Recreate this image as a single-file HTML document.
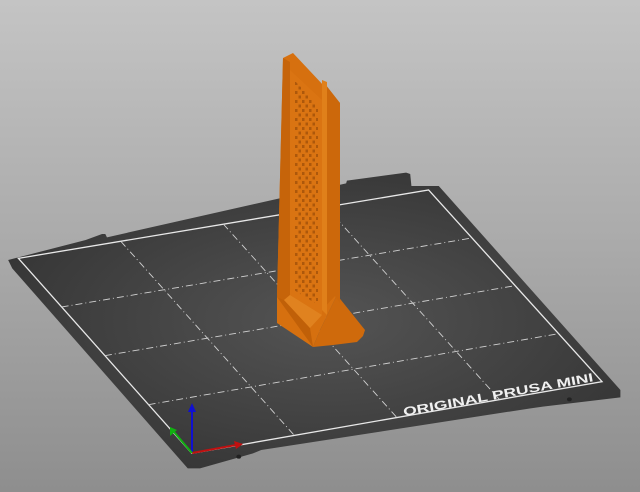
<!DOCTYPE html>
<html><head><style>
html,body{margin:0;padding:0;width:640px;height:492px;overflow:hidden;background:#a8a8a8}
svg{display:block}
</style></head><body>
<svg width="640" height="492" viewBox="0 0 640 492" xmlns="http://www.w3.org/2000/svg">
<defs>
<linearGradient id="bg" x1="0" y1="0" x2="0" y2="1">
<stop offset="0" stop-color="#c4c4c4"/><stop offset="0.5" stop-color="#aaaaaa"/><stop offset="1" stop-color="#8e8e8e"/>
</linearGradient>
<radialGradient id="bed" cx="0.52" cy="0.5" r="0.6">
<stop offset="0" stop-color="#545454"/><stop offset="1" stop-color="#343434"/>
</radialGradient>
<pattern id="holes" width="7" height="9" patternUnits="userSpaceOnUse">
<rect x="1" y="1" width="2.5" height="3" fill="#9a4c08"/>
<rect x="4.5" y="5.5" width="2.5" height="3" fill="#9a4c08"/>
</pattern>
</defs>
<rect width="640" height="492" fill="url(#bg)"/>
<g transform="translate(0,160) scale(0.40816,0.33333)">
<path d="M20,300 L210,240 L250,222 L258,222 L262,232 L848,70 L850,62 L995,38 L1005,42 L1008,78 L1075,78 L1520,690 L1520,712 L1330,740 L1300,745 L640,870 L620,880 L490,925 L460,925 L30,325 Z" fill="url(#bed)"/>
<path d="M45,295 L1050,90 L1475,665 L470,880 Z" fill="none" stroke="#e8e8e8" stroke-width="1.3" vector-effect="non-scaling-stroke"/>
<g stroke="#d0d0d0" stroke-width="0.9" stroke-dasharray="7 3 1 3" fill="none">
<path d="M296,244 L721,826 M547,192 L972,772 M799,141 L1224,719 M151,441 L1156,234 M257,587 L1262,377 M364,734 L1369,521" vector-effect="non-scaling-stroke"/>
</g>
<circle cx="585" cy="890" r="6" fill="#222"/>
<circle cx="1395" cy="718" r="6" fill="#222"/>
</g>
<text x="0" y="0" transform="translate(404,416) rotate(-10.4)" font-family="Liberation Sans, sans-serif" font-weight="bold" font-size="12" fill="#f0f0f0" textLength="193" lengthAdjust="spacingAndGlyphs">ORIGINAL PRUSA MINI</text>
<line x1="192" y1="453" x2="192" y2="410" stroke="#1010d0" stroke-width="2"/>
<polygon points="188,412 196,412 192,403" fill="#1010d0"/>
<line x1="192" y1="453" x2="236" y2="445" stroke="#c01010" stroke-width="2"/>
<polygon points="234,441 236,449 243,444" fill="#c01010"/>
<line x1="192" y1="453" x2="174" y2="432" stroke="#10b010" stroke-width="2"/>
<polygon points="170,436 177,430 170,427" fill="#10b010"/>
<polygon points="357,342 333,345 313,347 320,330 337,295 365,330 363,336" fill="#cf6a0c"/>
<polygon points="283,58 293,53 340,103 340,303 337,295 320,330 313,347 277,323 277,297" fill="#d6700f"/>
<polygon points="322,80 340,103 340,303 335,296 322,310" fill="#cc680b"/>
<polygon points="322,80 327,82 327,315 322,310" fill="#e0801a"/>
<polygon points="290,70 322,100 322,315 290,295" fill="#da7412"/>
<polygon points="294,80 318,105 318,305 294,290" fill="url(#holes)" opacity="0.7"/>
<polygon points="283,58 290,62 290,295 284,300 277,297" fill="#c6640a"/>
<polygon points="277,297 284,300 310,328 313,347" fill="#c06008"/>
<polygon points="284,300 290,295 322,315 310,328" fill="#e0821f"/>
</svg>
</body></html>
